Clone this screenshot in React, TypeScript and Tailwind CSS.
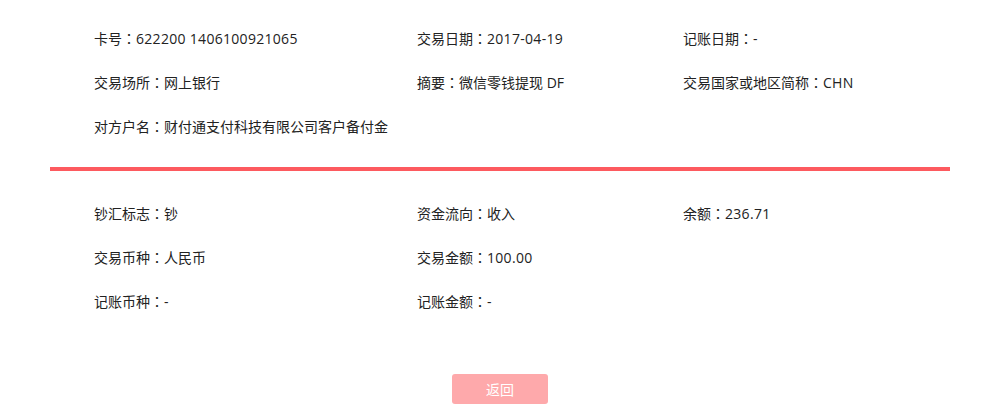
import React from "react";

const top = [
  [["卡号", "622200 1406100921065"], ["交易日期", "2017-04-19"], ["记账日期", "-"]],
  [["交易场所", "网上银行"], ["摘要", "微信零钱提现 DF"], ["交易国家或地区简称", "CHN"]],
  [["对方户名", "财付通支付科技有限公司客户备付金"]],
];
const bottom = [
  [["钞汇标志", "钞"], ["资金流向", "收入"], ["余额", "236.71"]],
  [["交易币种", "人民币"], ["交易金额", "100.00"]],
  [["记账币种", "-"], ["记账金额", "-"]],
];

function Section({ rows }: { rows: string[][][] }) {
  return (
    <div className="pl-[44px]">
      {rows.map((r, i) => (
        <div key={i} className="grid grid-cols-[323px_266px_1fr] h-[44px] items-center">
          {r.map((c, j) => {
            const ascii = /^[\x20-\x7e]+$/.test(c[1]);
            return (
              <div key={j} className="whitespace-nowrap">
                {c[0]}
                <span style={{ fontFamily: '"Noto Sans CJK TC", sans-serif' }}>：</span>
                <span className={ascii ? "tracking-[0.3px]" : ""}>{c[1]}</span>
              </div>
            );
          })}
        </div>
      ))}
    </div>
  );
}

export default function App() {
  return (
    <div
      className="w-[991px] h-[420px] bg-white text-[14px] text-[#222]"
      style={{ fontFamily: '"Open Sans", "Noto Sans CJK SC", sans-serif' }}
    >
      <div className="ml-[50px] w-[900px] pt-[16px]">
        <Section rows={top} />
        <div className="mt-[19px] h-[4px] bg-[#fd5a5f]" />
        <div className="mt-[20px]">
          <Section rows={bottom} />
        </div>
        <div className="mt-[51px] flex justify-center">
          <button
            className="w-[96px] h-[30px] rounded-[3px] bg-[#fea9ab] text-white text-[14px]"
            style={{ fontFamily: '"Noto Sans CJK SC", sans-serif' }}
          >
            返回
          </button>
        </div>
      </div>
    </div>
  );
}
